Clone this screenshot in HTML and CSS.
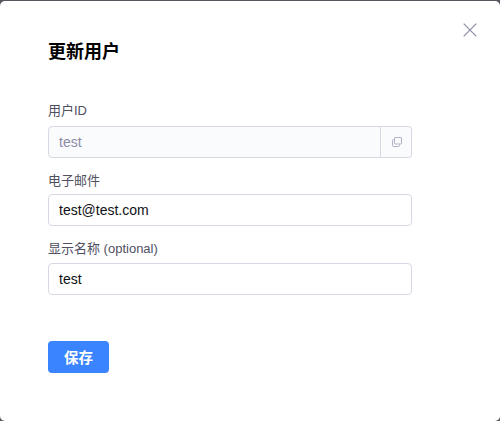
FILE: index.html
```html
<!DOCTYPE html>
<html lang="zh-CN">
<head>
    <meta charset="UTF-8">
    <meta name="viewport" content="width=device-width, initial-scale=1.0">
    <title>更新用户</title>
    <link rel="stylesheet" href="styles.css">
</head>
<body>
    <div class="modal">
        <button class="close" type="button" aria-label="关闭">
            <svg width="14" height="14" viewBox="0 0 14 14">
                <path d="M.7.7l12.6 12.6M13.3.7L.7 13.3" fill="none" stroke="#8c8caa" stroke-width="1.2"/>
            </svg>
        </button>
        <h1>更新用户</h1>
        <form>
            <div class="field">
                <label for="user-id">用户ID</label>
                <div class="input-group">
                    <input id="user-id" type="text" value="test" disabled>
                    <button class="copy" type="button" aria-label="复制">
                        <svg width="10" height="10" viewBox="0 0 10 10" fill="none" stroke="#b0b0c6">
                            <rect x="2.5" y=".5" width="7" height="6.5" rx=".5"/>
                            <path d="M2.5 2.5h-1a1 1 0 0 0-1 1v5a1 1 0 0 0 1 1h5a1 1 0 0 0 1-1v-1"/>
                        </svg>
                    </button>
                </div>
            </div>
            <div class="field">
                <label for="email">电子邮件</label>
                <input id="email" type="text" value="test@test.com">
            </div>
            <div class="field">
                <label for="name">显示名称 (optional)</label>
                <input id="name" type="text" value="test">
            </div>
            <button class="save" type="button">保存</button>
        </form>
    </div>
</body>
</html>
```

FILE: styles.css
```css
* {
    box-sizing: border-box;
}

body {
    margin: 0;
    padding-top: 1px;
    background: #56565e;
    font-family: "Liberation Sans", "Noto Sans CJK SC", sans-serif;
}

.modal {
    position: relative;
    height: 420px;
    padding: 38px 88px 0 48px;
    background: #fff;
    border-radius: 5px;
}

.close {
    position: absolute;
    top: 22px;
    right: 23px;
    width: 14px;
    height: 14px;
    padding: 0;
    border: none;
    background: none;
}

.close svg, .copy svg {
    display: block;
}

h1 {
    margin: 0 0 37px;
    font-size: 18px;
    line-height: 26px;
    color: #000;
}

.field {
    display: flex;
    flex-direction: column;
    margin-bottom: 13px;
}

label {
    height: 24px;
    font-size: 13px;
    line-height: 18px;
    color: #50505f;
}

.field:nth-child(2) label {
    height: 23px;
    line-height: 19px;
}

.field:nth-child(3) label {
    line-height: 20px;
}

input {
    width: 100%;
    height: 32px;
    padding: 0 10px;
    border: 1px solid #d8d8e5;
    border-radius: 4px;
    background: #fff;
    color: #101014;
    font-family: inherit;
    font-size: 14px;
}

.input-group {
    display: flex;
}

.input-group input {
    flex: 1;
    min-width: 0;
    background: #fafbfd;
    color: #8b8ba7;
    border-radius: 4px 0 0 4px;
}

.copy {
    display: flex;
    align-items: center;
    justify-content: center;
    width: 31px;
    height: 32px;
    padding: 0 0 0 1px;
    border: 1px solid #d8d8e5;
    border-left: none;
    border-radius: 0 4px 4px 0;
    background: #fafbfd;
}

.save {
    width: 61px;
    height: 32px;
    margin-top: 33px;
    padding: 0 0 2px;
    border: none;
    border-radius: 4px;
    background: #3a84ff;
    color: #fff;
    font-family: inherit;
    font-size: 14.5px;
    font-weight: bold;
}
```
